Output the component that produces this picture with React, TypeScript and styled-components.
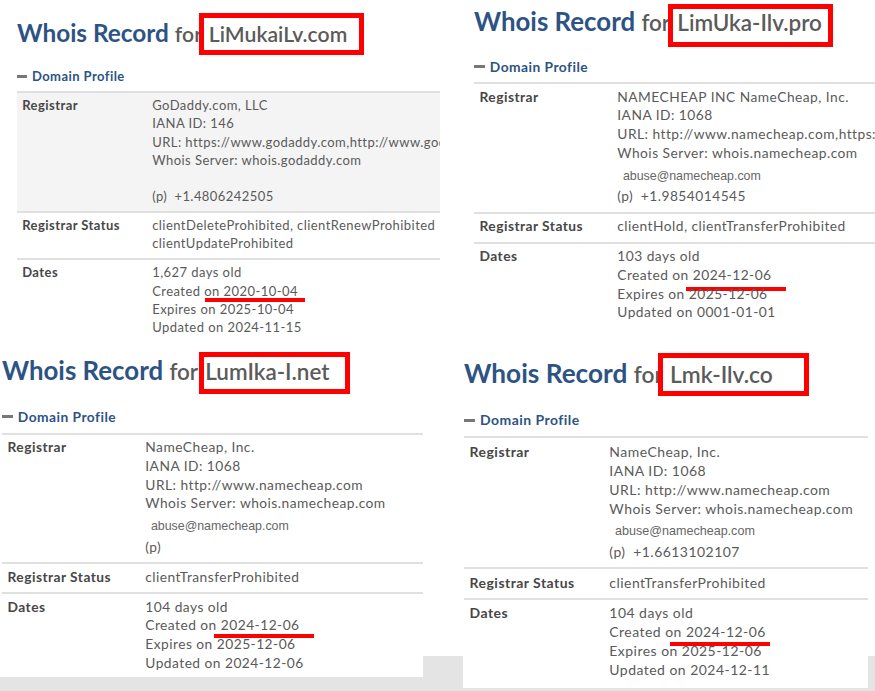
import React from 'react';
import styled, {createGlobalStyle} from 'styled-components';

type Record = {
  domain: string;
  registrar: string[];
  abuse?: string;
  phone: string;
  status: string[];
  dates: string[];
};

type Layout = {
  k: number; // scale of the cut-out
  x: number; // gap to the left neighbour
  w: number;
  h: number;
  pt: number;
  pl: number;
  lh: number;
  titleGap: number;
  box: {left: number; top: number; width: number; height: number};
  mark: {left: number; top: number};
  shaded?: boolean;
};

const GlobalStyle = createGlobalStyle`
  html, body {
    margin: 0;
    padding: 0;
  }
  body {
    font-family: Lato, "Liberation Sans", sans-serif;
    overflow: hidden;
  }
`;

const Page = styled.div`
  width: 875px;
  height: 691px;
  overflow: hidden;
  display: flex;
  flex-direction: column;
  background: linear-gradient(to bottom, #fff 656px, #e4e4e4 656px);
`;

const Strip = styled.div<{$h: number}>`
  display: flex;
  align-items: flex-start;
  height: ${p => p.$h}px;
  flex: none;
`;

const Panel = styled.section<{$l: Layout}>`
  flex: none;
  box-sizing: border-box;
  margin-left: ${p => p.$l.x}px;
  width: ${p => p.$l.w}px;
  height: ${p => p.$l.h}px;
  padding: ${p => p.$l.pt}px 0 0 ${p => p.$l.pl}px;
  overflow: hidden;
  background: #fff;
  font-size: ${p => 13 * p.$l.k}px;
  letter-spacing: 0.034em;
`;

const Title = styled.h1<{$gap: number}>`
  margin: 0 0 ${p => p.$gap}px;
  font-size: 1.875em;
  line-height: 1.23;
  font-weight: 700;
  letter-spacing: 0;
  color: #2d5384;
  white-space: nowrap;
`;

const For = styled.span`
  font-size: 0.87em;
  font-weight: 600;
  word-spacing: 2px;
  color: #5b5b5b;
`;

const Domain = styled.span`
  position: relative;
`;

const RedBox = styled.span`
  position: absolute;
  box-sizing: border-box;
  border: 5px solid #ff0000;
`;

const Section = styled.h2`
  display: flex;
  align-items: center;
  margin: 0 0 0.45em;
  font-size: 1em;
  line-height: 1.4em;
  font-weight: 700;
  color: #2d5384;
`;

const Minus = styled.span`
  width: 0.77em;
  height: 3px;
  margin-right: 0.38em;
  background: #777;
`;

const Row = styled.div<{$shaded?: boolean; $lh: number}>`
  display: grid;
  grid-template-columns: 10em 1fr;
  padding: 0.25em 0 0.42em 0.4em;
  border-top: 2px solid #e0e0e0;
  line-height: ${p => p.$lh}em;
  background: ${p => (p.$shaded ? '#f4f4f4' : 'transparent')};
`;

const Label = styled.div`
  font-weight: 700;
  color: #474747;
  white-space: nowrap;
`;

const Value = styled.div`
  min-width: 0;
  overflow: hidden;
  color: #5a5a5a;
  white-space: nowrap;
`;

const Line = styled.div`
  position: relative;
`;

const Abuse = styled.div`
  margin: 4px 0 2px 0.45em;
  font-family: "Liberation Sans", Arial, sans-serif;
  font-size: 0.9em;
  line-height: 1.5;
  letter-spacing: 0;
  color: #666;
`;

const Tag = styled.span`
  margin-right: 0.55em;
`;

const Underline = styled.span`
  position: absolute;
  width: 100px;
  height: 4px;
  background: #ff0000;
`;

const records: {rec: Record; lay: Layout}[] = [
  {
    rec: {
      domain: 'LiMukaiLv.com',
      registrar: [
        'GoDaddy.com, LLC',
        'IANA ID: 146',
        'URL: https://www.godaddy.com,http://www.godaddy.com',
        'Whois Server: whois.godaddy.com',
      ],
      phone: '+1.4806242505',
      status: [
        'clientDeleteProhibited, clientRenewProhibited',
        'clientUpdateProhibited',
      ],
      dates: ['1,627 days old', '2020-10-04', 'Expires on 2025-10-04', 'Updated on 2024-11-15'],
    },
    lay: {
      k: 1,
      x: 0,
      w: 440,
      h: 345,
      pt: 18,
      pl: 17,
      lh: 1.4,
      titleGap: 19,
      box: {left: -10, top: -29, width: 165, height: 42},
      mark: {left: 53, top: 16},
      shaded: true,
    },
  },
  {
    rec: {
      domain: 'LimUka-Ilv.pro',
      registrar: [
        'NAMECHEAP INC NameCheap, Inc.',
        'IANA ID: 1068',
        'URL: http://www.namecheap.com,https://www.namecheap.com',
        'Whois Server: whois.namecheap.com',
      ],
      abuse: 'abuse@namecheap.com',
      phone: '+1.9854014545',
      status: ['clientHold, clientTransferProhibited'],
      dates: ['103 days old', '2024-12-06', 'Expires on 2025-12-06', 'Updated on 0001-01-01'],
    },
    lay: {
      k: 1.06,
      x: 18,
      w: 417,
      h: 345,
      pt: 6,
      pl: 16,
      lh: 1.36,
      titleGap: 19,
      box: {left: -9, top: -27, width: 165, height: 43},
      mark: {left: 69, top: 21},
    },
  },
  {
    rec: {
      domain: 'LumIka-I.net',
      registrar: [
        'NameCheap, Inc.',
        'IANA ID: 1068',
        'URL: http://www.namecheap.com',
        'Whois Server: whois.namecheap.com',
      ],
      abuse: 'abuse@namecheap.com',
      phone: '',
      status: ['clientTransferProhibited'],
      dates: ['104 days old', '2024-12-06', 'Expires on 2025-12-06', 'Updated on 2024-12-06'],
    },
    lay: {
      k: 1.06,
      x: 0,
      w: 423,
      h: 332,
      pt: 10,
      pl: 2,
      lh: 1.36,
      titleGap: 20.5,
      box: {left: -6, top: -28, width: 151, height: 42},
      mark: {left: 69, top: 18},
    },
  },
  {
    rec: {
      domain: 'Lmk-Ilv.co',
      registrar: [
        'NameCheap, Inc.',
        'IANA ID: 1068',
        'URL: http://www.namecheap.com',
        'Whois Server: whois.namecheap.com',
      ],
      abuse: 'abuse@namecheap.com',
      phone: '+1.6613102107',
      status: ['clientTransferProhibited'],
      dates: ['104 days old', '2024-12-06', 'Expires on 2025-12-06', 'Updated on 2024-12-11'],
    },
    lay: {
      k: 1.075,
      x: 40,
      w: 405,
      h: 343,
      pt: 11.5,
      pl: 1,
      lh: 1.36,
      titleGap: 21.5,
      box: {left: -12, top: -30, width: 151, height: 43},
      mark: {left: 61, top: 20},
    },
  },
];

// one cut-out of a whois page, with its red annotations
function WhoisCard({rec, lay}: {rec: Record; lay: Layout}) {
  const [age, created, expires, updated] = rec.dates;
  return (
    <Panel $l={lay}>
      <Title $gap={lay.titleGap}>
        Whois Record{' '}
        <For>
          for{' '}
          <Domain>
            {rec.domain}
            <RedBox
              style={{
                left: lay.box.left,
                top: `calc(0.987em + ${lay.box.top}px)`,
                width: lay.box.width,
                height: lay.box.height,
              }}
            />
          </Domain>
        </For>
      </Title>

      <Section>
        <Minus />
        Domain Profile
      </Section>

      <Row $shaded={lay.shaded} $lh={lay.lh}>
        <Label>Registrar</Label>
        <Value>
          {rec.registrar.map(t => (
            <Line key={t}>{t}</Line>
          ))}
          {rec.abuse ? <Abuse>{rec.abuse}</Abuse> : <Line>&nbsp;</Line>}
          <Line>
            <Tag>(p)</Tag>
            {rec.phone}
          </Line>
        </Value>
      </Row>

      <Row $lh={lay.lh}>
        <Label>Registrar Status</Label>
        <Value>
          {rec.status.map(t => (
            <Line key={t}>{t}</Line>
          ))}
        </Value>
      </Row>

      <Row $lh={lay.lh}>
        <Label>Dates</Label>
        <Value>
          <Line>{age}</Line>
          <Line>
            Created on {created}
            <Underline style={{left: lay.mark.left, top: lay.mark.top}} />
          </Line>
          <Line>{expires}</Line>
          <Line>{updated}</Line>
        </Value>
      </Row>
    </Panel>
  );
}

export default function App() {
  return (
    <>
      <GlobalStyle />
      <Page>
        <Strip $h={345}>
          <WhoisCard {...records[0]} />
          <WhoisCard {...records[1]} />
        </Strip>
        <Strip $h={346}>
          <WhoisCard {...records[2]} />
          <WhoisCard {...records[3]} />
        </Strip>
      </Page>
    </>
  );
}
